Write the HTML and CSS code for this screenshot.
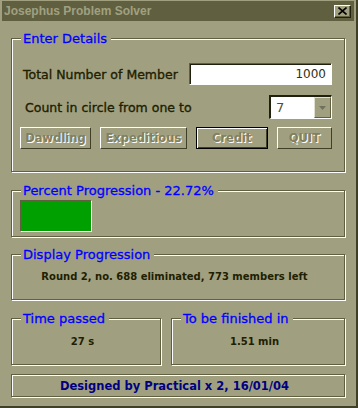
FILE: index.html
```html
<!DOCTYPE html>
<html lang="en">
<head>
    <meta charset="UTF-8">
    <meta name="viewport" content="width=device-width, initial-scale=1.0">
    <title>Josephus Problem Solver</title>
    <link rel="stylesheet" href="styles.css">
</head>
<body>
    <div class="window">
        <div class="titlebar">
            <span class="title">Josephus Problem Solver</span>
            <span class="close-btn">
                <svg width="9" height="8" viewBox="0 0 9 8">
                    <path d="M0.5 0.5 L8.5 7.5 M8.5 0.5 L0.5 7.5" stroke="#000" stroke-width="1.6" fill="none"/>
                </svg>
            </span>
        </div>
        <div class="client">
            <div class="frame details">
                <span class="legend">Enter Details</span>
                <div class="row">
                    <span class="label">Total Number of Member</span>
                    <div class="textbox">1000</div>
                </div>
                <div class="row row-count">
                    <span class="label">Count in circle from one to</span>
                    <div class="combo">
                        <span class="combo-value">7</span>
                        <span class="combo-drop">
                            <svg width="7" height="4" viewBox="0 0 7 4"><path d="M0 0 H7 L3.5 4 Z" fill="#707060"/></svg>
                        </span>
                    </div>
                </div>
                <div class="buttons">
                    <button class="btn btn-dawdling">Dawdling</button>
                    <button class="btn btn-expeditious">Expeditious</button>
                    <button class="btn btn-credit">Credit</button>
                    <button class="btn btn-quit">QUIT</button>
                </div>
            </div>

            <div class="frame percent">
                <span class="legend">Percent Progression - 22.72%</span>
                <div class="bar"></div>
            </div>

            <div class="frame display">
                <span class="legend">Display Progression</span>
                <div class="value">Round 2, no. 688 eliminated, 773 members left</div>
            </div>

            <div class="times">
                <div class="frame time-passed">
                    <span class="legend">Time passed</span>
                    <div class="value">27 s</div>
                </div>
                <div class="frame time-left">
                    <span class="legend">To be finished in</span>
                    <div class="value">1.51 min</div>
                </div>
            </div>

            <div class="frame footer">
                <div class="value credit-line">Designed by Practical x 2, 16/01/04</div>
            </div>
        </div>
    </div>
</body>
</html>
```

FILE: styles.css
```css
body {
    margin: 0;
    background: #a0a080;
    font-family: "DejaVu Sans", Verdana, sans-serif;
}
.window {
    width: 358px;
    height: 408px;
    box-sizing: border-box;
    background: #a0a080;
    padding: 1px 2px 0 2px;
    border-right: 2px solid #404028;
    border-bottom: 2px solid #404028;
}
.titlebar {
    height: 20px;
    background: #606040;
    display: flex;
    align-items: center;
    justify-content: space-between;
    padding: 0 3px 0 2px;
}
.title {
    font-family: "Liberation Sans", Arial, sans-serif;
    font-weight: bold;
    font-size: 12px;
    color: #a0a080;
}
.close-btn {
    width: 17px;
    height: 13px;
    box-sizing: border-box;
    background: #a0a080;
    border-top: 1px solid #fff;
    border-left: 1px solid #fff;
    border-right: 1px solid #202010;
    border-bottom: 1px solid #202010;
    box-shadow: inset -1px -1px 0 #606040;
    display: flex;
    align-items: center;
    justify-content: center;
}
.client {
    padding: 17px 0 0 9px;
}
.frame {
    position: relative;
    box-sizing: border-box;
    width: 334px;
    border: 1px solid #606040;
    box-shadow: 1px 1px 0 #fff, inset 1px 1px 0 #fff;
}
.legend {
    position: absolute;
    top: -8px;
    left: 9px;
    padding: 0 4px 0 2px;
    background: #a0a080;
    color: #0000ff;
    font-size: 13px;
    line-height: 15px;
    -webkit-text-stroke: 0.3px #0000ff;
}
.details {
    height: 134px;
    padding: 24px 12px 0 11px;
}
.row {
    display: flex;
    justify-content: space-between;
    align-items: center;
    height: 22px;
}
.label {
    font-size: 12.5px;
    color: #202000;
    white-space: nowrap;
    -webkit-text-stroke: 0.35px #202000;
}
.textbox {
    width: 143px;
    height: 22px;
    box-sizing: border-box;
    background: #fff;
    border-top: 1px solid #606040;
    border-left: 1px solid #606040;
    border-right: 1px solid #fff;
    border-bottom: 1px solid #fff;
    box-shadow: inset 1px 1px 0 #202010;
    text-align: right;
    padding: 3px 5px 0 0;
    font-size: 12px;
    color: #303010;
}
.row-count {
    margin-top: 10px;
    height: 24px;
    padding-left: 2px;
}
.combo {
    width: 63px;
    height: 24px;
    box-sizing: border-box;
    background: #fff;
    border-top: 2px solid #202010;
    border-left: 2px solid #202010;
    border-right: 1px solid #fff;
    border-bottom: 1px solid #fff;
    display: flex;
    justify-content: space-between;
}
.combo-value {
    padding: 3px 0 0 5px;
    font-size: 13px;
    color: #505030;
}
.combo-drop {
    width: 15px;
    background: #a0a080;
    border-left: 1px solid #e0e0d0;
    border-top: 1px solid #e0e0d0;
    border-right: 1px solid #606040;
    border-bottom: 1px solid #606040;
    display: flex;
    align-items: center;
    justify-content: center;
}
.buttons {
    display: flex;
    gap: 9px;
    margin-top: 8px;
    margin-left: -3px;
}
.btn {
    height: 22px;
    box-sizing: border-box;
    background: #a0a080;
    border: none;
    border-top: 1px solid #fff;
    border-left: 1px solid #fff;
    border-right: 1px solid #404028;
    border-bottom: 1px solid #404028;
    font-family: "DejaVu Sans", Verdana, sans-serif;
    font-size: 11.5px;
    font-weight: bold;
    color: #808060;
    text-shadow: 1px 1px 0 #fff;
    padding: 0;
}
.btn-dawdling { width: 72px; }
.btn-expeditious { width: 88px; }
.btn-credit {
    width: 73px;
    border: 1px solid #000;
    box-shadow: inset 1px 1px 0 #fff, inset -1px -1px 0 #404028;
}
.btn-quit { width: 56px; }
.percent {
    height: 47px;
    margin-top: 18px;
    padding: 9px 0 0 8px;
}
.bar {
    width: 72px;
    height: 32px;
    box-sizing: border-box;
    background: #00a000;
    border-top: 1px solid #606040;
    border-left: 1px solid #606040;
    border-right: 1px solid #fff;
    border-bottom: 1px solid #fff;
}
.value {
    font-size: 10px;
    font-weight: bold;
    color: #202000;
    text-align: center;
    padding-right: 7px;
}
.display {
    height: 46px;
    margin-top: 17px;
    padding-top: 16px;
}
.times {
    display: flex;
    gap: 10px;
    margin-top: 18px;
    width: 334px;
}
.times .frame {
    height: 47px;
    padding-top: 17px;
}
.time-passed { width: 150px; }
.time-left { width: 174px; }
.footer {
    height: 23px;
    margin-top: 9px;
    padding-top: 4px;
}
.credit-line {
    color: #000080;
    font-size: 11.5px;
}
```
